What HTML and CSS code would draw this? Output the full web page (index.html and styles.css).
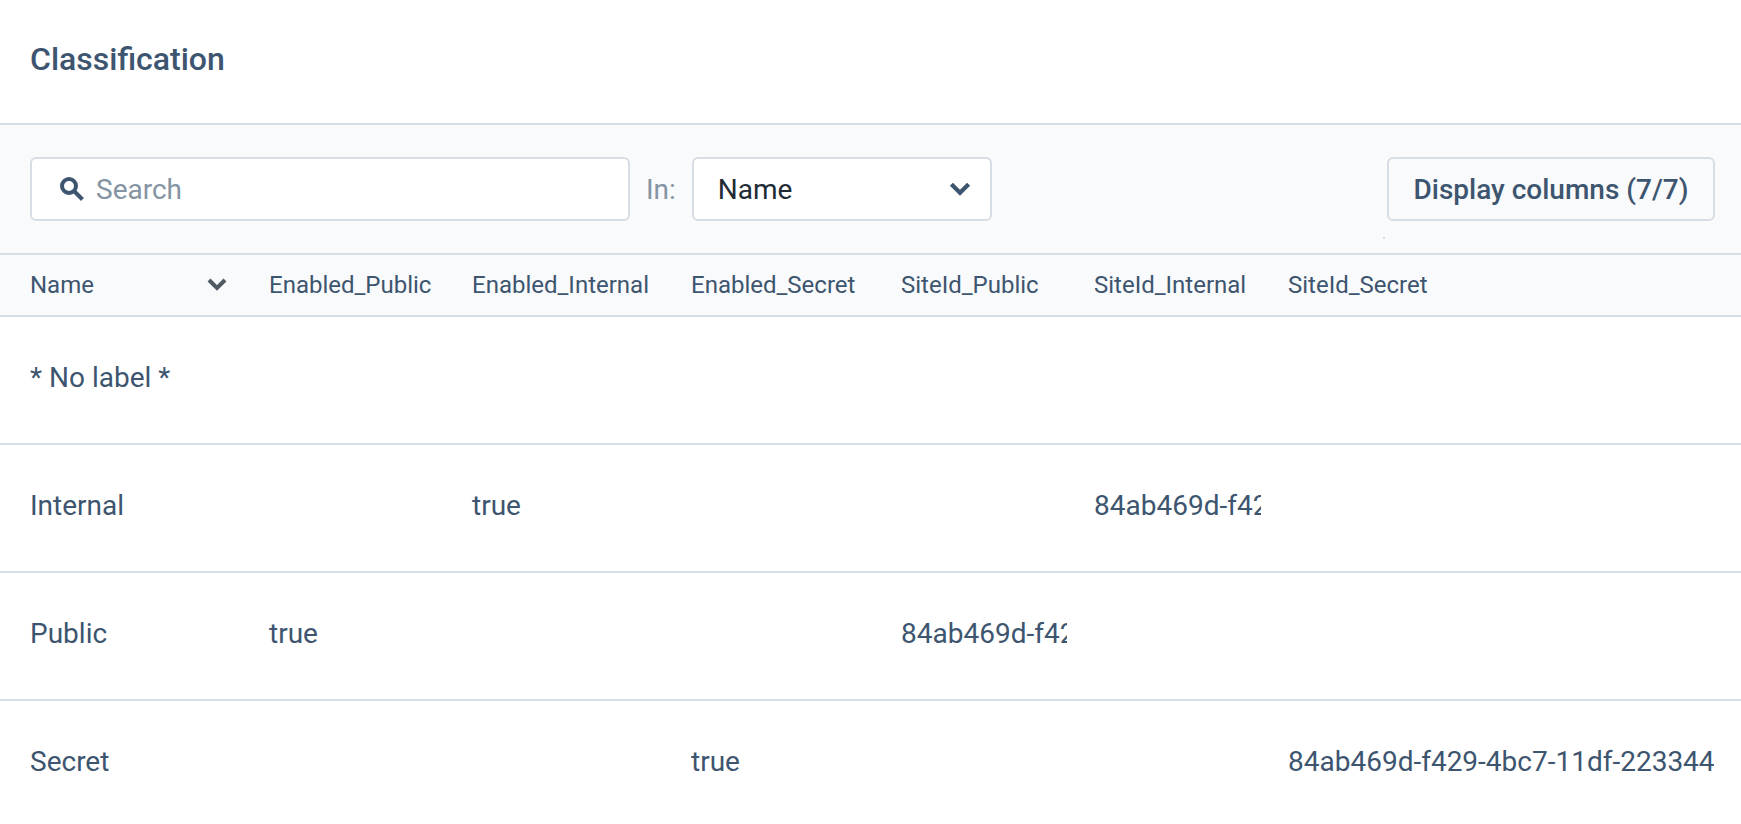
FILE: index.html
```html
<!DOCTYPE html>
<html lang="en">
<head>
  <meta charset="UTF-8" />
  <meta name="viewport" content="width=device-width, initial-scale=1.0" />
  <title>Classification</title>
  <link rel="stylesheet" href="styles.css">
</head>
<body>
  <header class="page-header">
    <h1>Classification</h1>
  </header>

  <div class="toolbar">
    <div class="search">
      <svg class="search-icon" viewBox="0 0 24 24" aria-hidden="true">
        <circle cx="9" cy="9" r="7" />
        <path d="M14 14l8.500 8.500" />
      </svg>
      <input type="text" id="search" placeholder="Search" aria-label="Search">
    </div>
    <label class="in-label" for="searchIn">In:</label>
    <div class="select">
      <select id="searchIn">
        <option>Name</option>
        <option>Enabled_Public</option>
        <option>Enabled_Internal</option>
        <option>Enabled_Secret</option>
      </select>
      <svg class="chevron" viewBox="0 0 20 14" aria-hidden="true">
        <path d="M2 2l8 8 8-8" />
      </svg>
    </div>
    <div class="columns">
      <button type="button" class="columns-button">Display columns (7/7)</button>
      <div class="columns-menu"></div>
    </div>
  </div>

  <table class="grid">
    <colgroup>
      <col class="col-name">
      <col class="col-enabled-public">
      <col class="col-enabled-internal">
      <col class="col-enabled-secret">
      <col class="col-site-public">
      <col class="col-site-internal">
      <col>
    </colgroup>
    <thead>
      <tr>
        <th>
          <div class="sorted">
            Name
            <svg class="sort-icon" viewBox="0 0 20 14" aria-hidden="true">
              <path d="M2 2l8 8 8-8" />
            </svg>
          </div>
        </th>
        <th>Enabled_Public</th>
        <th>Enabled_Internal</th>
        <th>Enabled_Secret</th>
        <th>SiteId_Public</th>
        <th>SiteId_Internal</th>
        <th>SiteId_Secret</th>
      </tr>
    </thead>
    <tbody>
      <tr>
        <td>* No label *</td>
        <td></td>
        <td></td>
        <td></td>
        <td></td>
        <td></td>
        <td></td>
      </tr>
      <tr>
        <td>Internal</td>
        <td></td>
        <td>true</td>
        <td></td>
        <td></td>
        <td><div class="clip">84ab469d-f429</div></td>
        <td></td>
      </tr>
      <tr>
        <td>Public</td>
        <td>true</td>
        <td></td>
        <td></td>
        <td><div class="clip">84ab469d-f429</div></td>
        <td></td>
        <td></td>
      </tr>
      <tr>
        <td>Secret</td>
        <td></td>
        <td></td>
        <td>true</td>
        <td></td>
        <td></td>
        <td><div class="clip">84ab469d-f429-4bc7-11df-223344</div></td>
      </tr>
    </tbody>
  </table>
</body>
</html>
```
FILE: styles.css
```css
* {
  box-sizing: border-box;
}
body {
  margin: 0;
  font-family: Roboto, sans-serif;
  font-size: 28px;
  color: #3d556f;
  background: #fff;
}
.page-header {
  padding: 40px 30px 45px;
  border-bottom: 2px solid #d7dde5;
}
h1 {
  margin: 0;
  font-size: 32px;
  line-height: 38px;
  font-weight: 500;
}

/* Toolbar */
.toolbar {
  display: flex;
  align-items: center;
  padding: 32px 26px 32px 30px;
  background: #f9fafc;
  border-bottom: 2px solid #d7dde5;
}
.search {
  display: flex;
  align-items: center;
  gap: 12px;
  width: 600px;
  height: 64px;
  padding: 0 28px;
  background: #fff;
  border: 2px solid #d7dde5;
  border-radius: 6px;
}
.search input {
  flex: 1;
  min-width: 0;
  padding: 0;
  border: 0;
  outline: 0;
  background: none;
  font: inherit;
  color: #212b36;
}
.search input::placeholder {
  color: #8594a3;
}
svg {
  flex: none;
  fill: none;
  stroke: #3d556f;
  stroke-width: 4;
}
.search-icon {
  width: 24px;
  height: 24px;
}
.in-label {
  margin: 0 16px;
  color: #8594a3;
}
.select {
  position: relative;
  width: 300px;
}
.select select {
  width: 100%;
  height: 64px;
  padding: 0 24px;
  appearance: none;
  background: #fff;
  border: 2px solid #d7dde5;
  border-radius: 6px;
  font: inherit;
  color: #212b36;
}
.chevron {
  position: absolute;
  top: 25px;
  right: 21px;
  width: 22px;
  height: 15px;
  pointer-events: none;
}
.columns {
  position: relative;
  margin-left: auto;
}
.columns-button {
  min-width: 328px;
  height: 64px;
  padding: 0 24px;
  background: none;
  border: 2px solid #d7dde5;
  border-radius: 6px;
  font: inherit;
  font-weight: 500;
  color: inherit;
}
.columns-menu {
  position: absolute;
  top: 80px;
  left: -4px;
  border: 1px solid #d7dde5;
}

/* Table */
.grid {
  width: 100%;
  table-layout: fixed;
  border-collapse: separate;
  border-spacing: 0;
}
.col-name {
  width: 269px;
}
.col-enabled-public {
  width: 203px;
}
.col-enabled-internal {
  width: 219px;
}
.col-enabled-secret {
  width: 210px;
}
.col-site-public {
  width: 193px;
}
.col-site-internal {
  width: 194px;
}
th,
td {
  padding: 0 27px 0 0;
  text-align: left;
  white-space: nowrap;
  border-bottom: 2px solid #d7dde5;
}
th:first-child,
td:first-child {
  padding-left: 30px;
}
th {
  height: 62px;
  font-size: 24px;
  font-weight: 400;
  background: #f9fafc;
}
td {
  height: 128px;
  padding-bottom: 6px;
}
tbody tr:last-child td {
  height: 123px;
  padding-bottom: 2px;
  border-bottom: 0;
}
.sorted {
  display: flex;
  align-items: center;
  justify-content: space-between;
}
.sort-icon {
  width: 20px;
  height: 14px;
  margin-right: 15px;
  stroke: #4f5963;
}
.clip {
  overflow: hidden;
}
```
